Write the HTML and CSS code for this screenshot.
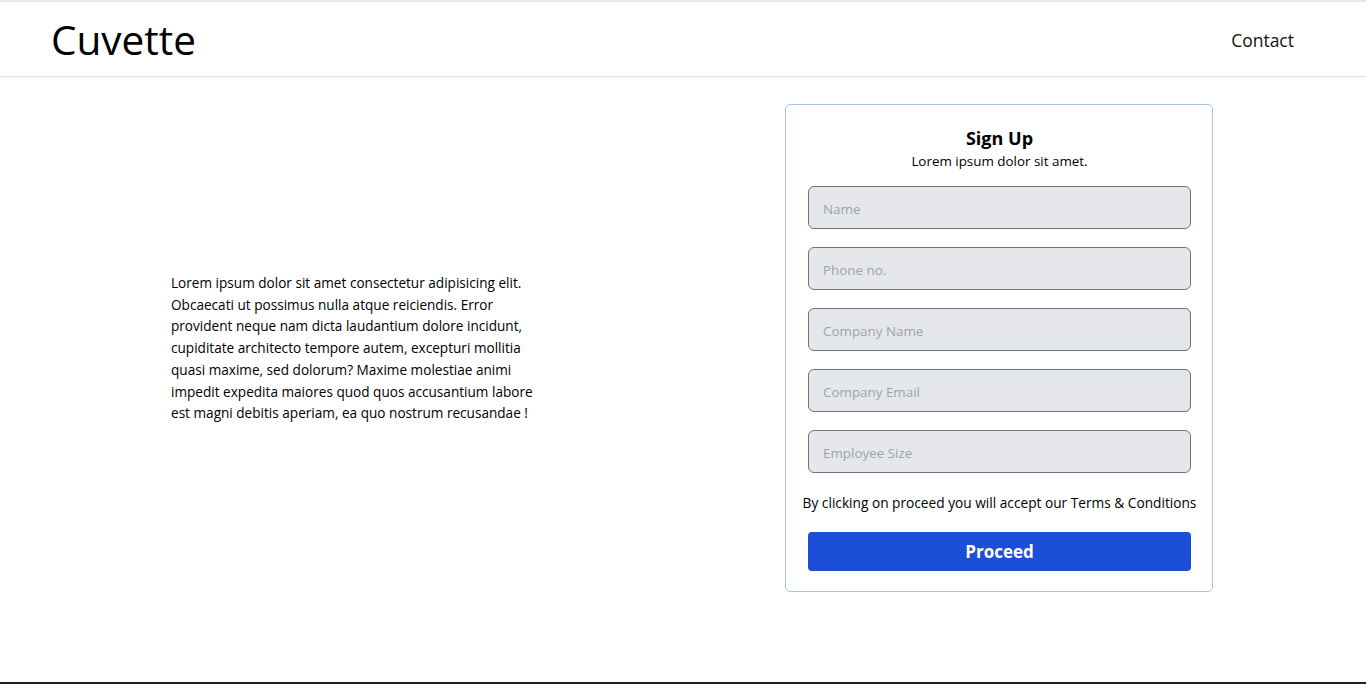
FILE: index.html
```html
<!DOCTYPE html>
<html lang="en">
<head>
<meta charset="utf-8">
<title>Cuvette</title>
<link rel="stylesheet" href="styles.css">
</head>
<body>
<header class="topbar">
  <div class="brand">Cuvette</div>
  <nav class="nav"><a class="nav-link" href="#">Contact</a></nav>
</header>
<main class="main">
  <section class="intro">
    <p class="intro-text">Lorem ipsum dolor sit amet consectetur adipisicing elit. Obcaecati ut possimus nulla atque reiciendis. Error provident neque nam dicta laudantium dolore incidunt, cupiditate architecto tempore autem, excepturi mollitia quasi maxime, sed dolorum? Maxime molestiae animi impedit expedita maiores quod quos accusantium labore est magni debitis aperiam, ea quo nostrum recusandae !</p>
  </section>
  <form class="card">
    <h1 class="card-title">Sign Up</h1>
    <p class="card-sub">Lorem ipsum dolor sit amet.</p>
    <div class="fields">
      <input class="field" type="text" placeholder="Name">
      <input class="field" type="text" placeholder="Phone no.">
      <input class="field" type="text" placeholder="Company Name">
      <input class="field" type="text" placeholder="Company Email">
      <input class="field" type="text" placeholder="Employee Size">
    </div>
    <p class="terms">By clicking on proceed you will accept our Terms &amp; Conditions</p>
    <button class="proceed" type="button">Proceed</button>
  </form>
</main>
<div class="taskbar"></div>
</body>
</html>
```
FILE: styles.css
```css
* { box-sizing: border-box; }
html, body { margin: 0; padding: 0; }
body {
  font-family: "Open Sans", "Noto Sans", sans-serif;
  color: #000;
  background: #fff;
  height: 684px;
  overflow: hidden;
  display: flex;
  flex-direction: column;
  border-top: 2px solid #e5e5e5;
}
.topbar {
  height: 75px;
  display: flex;
  align-items: center;
  justify-content: space-between;
  padding: 0 72px 0 51px;
  border-bottom: 1px solid #e2e2e2;
  box-shadow: 0 1px 3px rgba(0,0,0,0.06);
}
.brand {
  font-size: 40.5px;
  font-weight: 400;
  line-height: 1;
  margin-top: 2px;
}
.nav-link {
  font-size: 17.5px;
  color: #111;
  text-decoration: none;
  margin-top: 2px;
  display: block;
}
.main {
  flex: 1;
  display: flex;
  align-items: flex-start;
  padding: 27px 153px 0 171px;
}
.intro {
  width: 368px;
  display: flex;
  align-items: center;
  height: 488px;
}
.intro-text {
  margin: 0;
  font-size: 13.6px;
  line-height: 21.7px;
}
.card {
  margin-left: auto;
  width: 428px;
  border: 1px solid #a9c6e6;
  border-radius: 5px;
  padding: 20px 21px 20px 22px;
  display: flex;
  flex-direction: column;
  align-items: center;
}
.card-title {
  margin: 0;
  font-size: 18px;
  font-weight: 700;
  line-height: 26px;
}
.card-sub {
  margin: 0 0 15px;
  font-size: 13.4px;
  line-height: 20px;
}
.fields {
  width: 383px;
  display: flex;
  flex-direction: column;
  gap: 18px;
}
.field {
  height: 43px;
  width: 100%;
  background: #e5e7eb;
  border: 1px solid #6b7280;
  border-radius: 6px;
  padding: 2px 14px 0;
  font-family: inherit;
  font-size: 13.4px;
}
.field::placeholder { color: #9ca3af; }
.terms {
  margin: 20px -30px 0;
  font-size: 13.7px;
  line-height: 20px;
  white-space: nowrap;
}
.proceed {
  margin-top: 19px;
  width: 383px;
  height: 39px;
  background: #1d4ed8;
  color: #fff;
  border: none;
  border-radius: 4px;
  font-family: inherit;
  font-size: 17px;
  font-weight: 700;
}
.taskbar {
  height: 2px;
  background: #1f1f1f;
  flex: none;
}
```
